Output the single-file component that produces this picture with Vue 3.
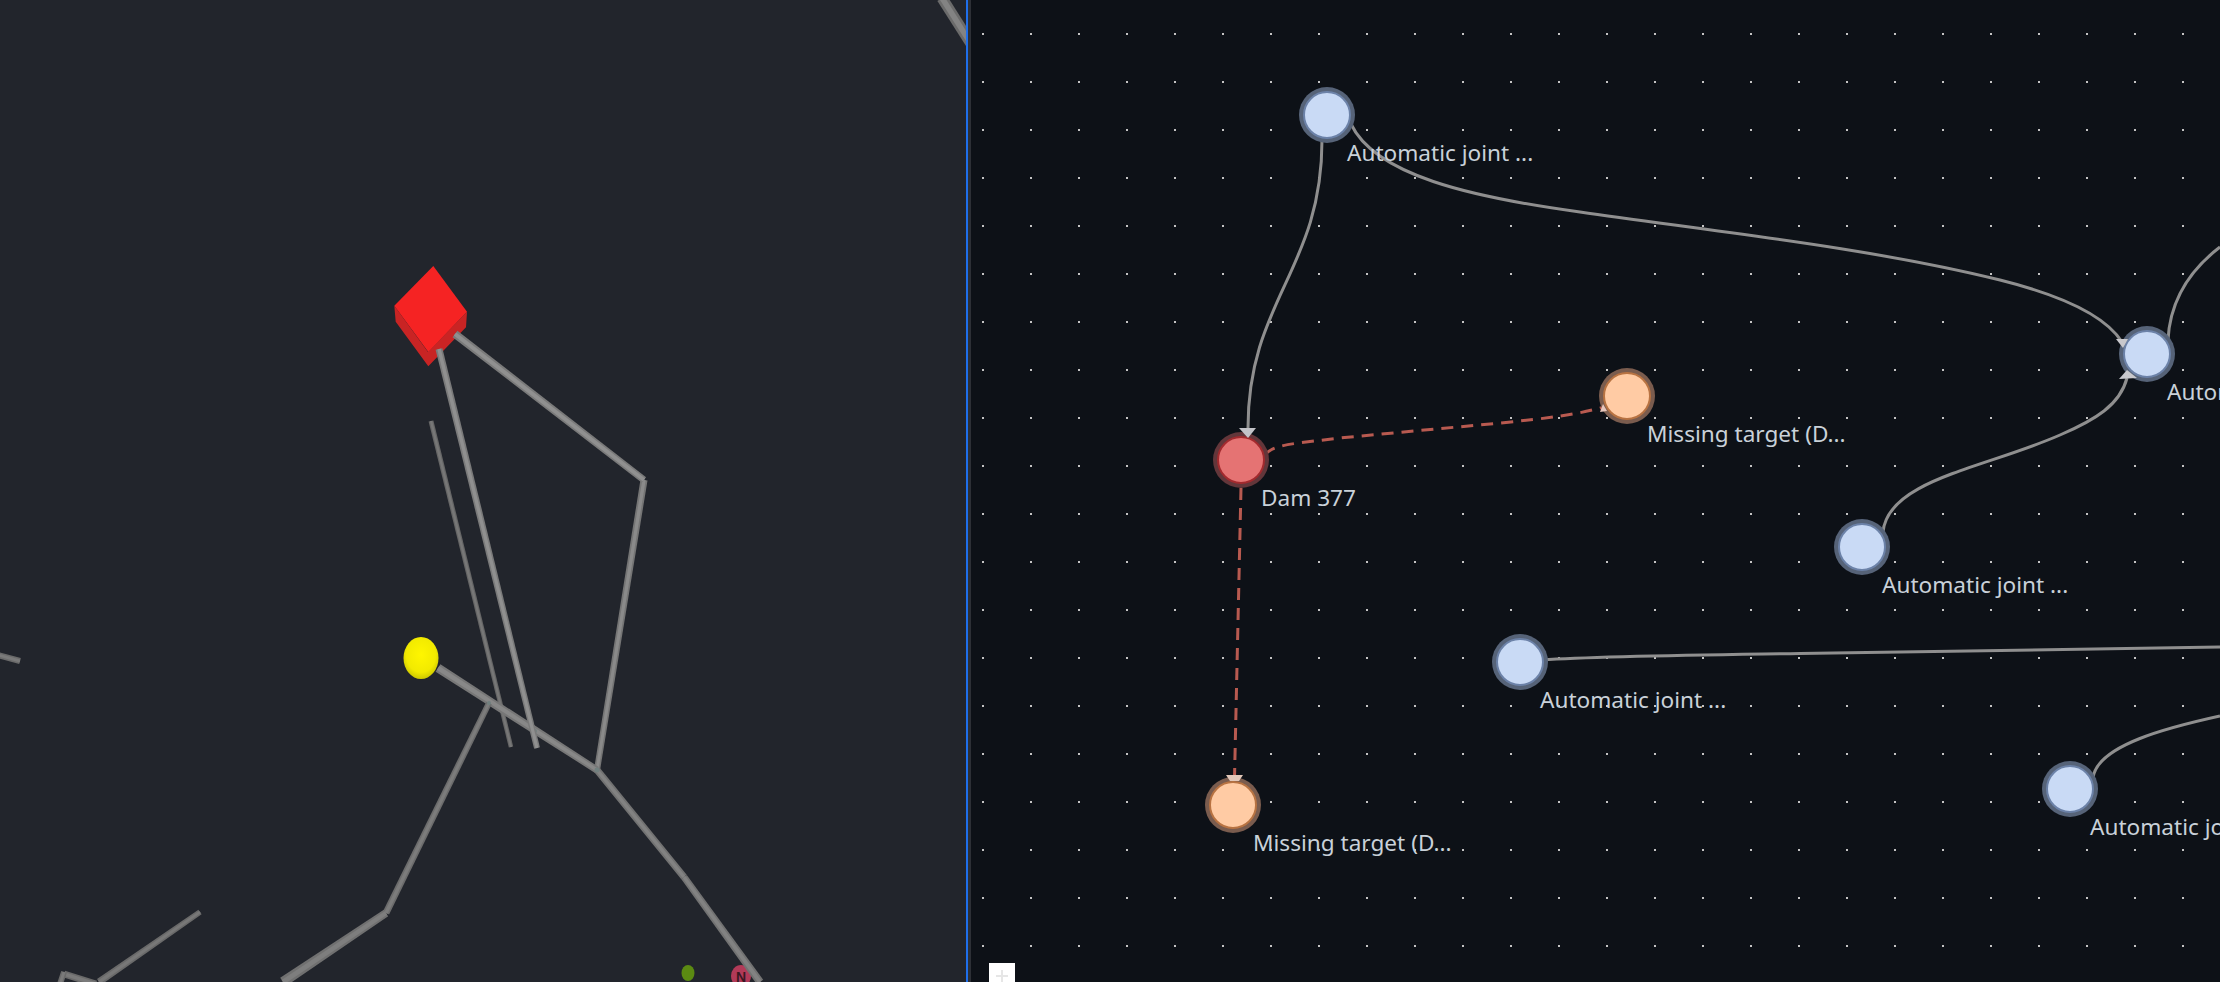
<template>
  <div class="workspace">
    <section class="viewer">
      <svg class="viewer-canvas" viewBox="0 0 966 982" width="966" height="982">
        <defs>
          <radialGradient id="ball" cx="50%" cy="42%" r="60%">
            <stop offset="0%" stop-color="#fff600" />
            <stop offset="70%" stop-color="#f2ea00" />
            <stop offset="100%" stop-color="#c9c400" />
          </radialGradient>
        </defs>

        <ellipse cx="688" cy="973" rx="6.5" ry="8" fill="#5b8a12" />
        <ellipse cx="741" cy="976" rx="10" ry="11" fill="#b23a58" />
        <text x="741" y="982" class="marker-letter" text-anchor="middle">N</text>

        <g v-for="(pipe, i) in pipeShapes" :key="i">
          <polygon :points="pipe.outer" :fill="pipe.edge" />
          <polygon :points="pipe.inner" :fill="pipe.core" />
        </g>

        <circle cx="489" cy="703" r="2" fill="#71807f" />
        <circle cx="535" cy="731" r="2" fill="#71807f" />
        <circle cx="597" cy="770" r="2.5" fill="#71807f" />

        <ellipse cx="421" cy="658" rx="17.5" ry="21" fill="url(#ball)" />

        <polygon points="394.3,305.7 395.7,321.7 428.3,366.3 466,327.3 467,311.7 428,352" fill="#c92424" />
        <polygon points="433.3,266 467,311.7 428.3,352 394.3,305.7" fill="#f52323" />
        <polygon :points="cubePipes[0].outer" :fill="cubePipes[0].edge" />
        <polygon :points="cubePipes[0].inner" :fill="cubePipes[0].core" />
        <polygon :points="cubePipes[1].outer" :fill="cubePipes[1].edge" />
        <polygon :points="cubePipes[1].inner" :fill="cubePipes[1].core" />
      </svg>
    </section>

    <div class="divider"></div>

    <section class="flow">
      <svg class="flow-edges" viewBox="971 0 1249 982" width="1249" height="982">
        <path v-for="(d, i) in solidEdges" :key="'s' + i" :d="d" class="edge" />
        <path v-for="(d, i) in dashedEdges" :key="'d' + i" :d="d" class="edge edge-missing" />
      </svg>

      <div
        v-for="node in nodes"
        :key="node.id"
        class="node"
        :class="node.kind"
        :style="{ left: node.x - 971 + 'px', top: node.y + 'px' }"
      >
        <span class="node-dot"></span>
        <span class="node-label">{{ node.label }}</span>
      </div>

      <svg class="flow-arrows" viewBox="971 0 1249 982" width="1249" height="982">
        <polygon points="1239,428 1256,428 1248,438" fill="#c3c3c8" />
        <polygon points="2116,339 2128,339 2123,348" fill="#c8c8cc" />
        <polygon points="2119,379 2127,370 2137,378" fill="#c8c8cc" />
        <polygon points="1600,412 1603,404 1607,411" fill="#e6c6bc" />
        <polygon points="1226,775 1243,775 1239,781 1230,781" fill="#e2c8ba" />
      </svg>

      <button type="button" class="zoom-btn" aria-label="zoom in">
        <svg viewBox="0 0 26 26" width="26" height="26">
          <path d="M13 7v13M7 13h12" stroke="#e6e6e6" stroke-width="2" fill="none" />
        </svg>
      </button>
    </section>
  </div>
</template>

<script setup>
// tapered tube drawn as a polygon, width goes from w1 to w2
const taper = (x1, y1, x2, y2, w1, w2) => {
  const len = Math.hypot(x2 - x1, y2 - y1)
  const nx = (y2 - y1) / len
  const ny = -(x2 - x1) / len
  return [
    [x1 + (nx * w1) / 2, y1 + (ny * w1) / 2],
    [x2 + (nx * w2) / 2, y2 + (ny * w2) / 2],
    [x2 - (nx * w2) / 2, y2 - (ny * w2) / 2],
    [x1 - (nx * w1) / 2, y1 - (ny * w1) / 2],
  ]
    .map((p) => p.map((v) => v.toFixed(1)).join(','))
    .join(' ')
}

const toShape = ([x1, y1, x2, y2, w1, w2, edge = '#757575', core = '#8a8a8a']) => ({
  outer: taper(x1, y1, x2, y2, w1, w2),
  inner: taper(x1, y1, x2, y2, w1 * 0.5, w2 * 0.5),
  edge,
  core,
})

const pipeShapes = [
  [644, 480, 597, 770, 7, 6],
  [431, 421, 511, 747, 5, 4.5, '#666', '#777'],
  [438, 668, 597, 770, 9, 7, '#777', '#888'],
  [597, 770, 684, 877, 7, 7, '#727272', '#828282'],
  [684, 877, 760, 982, 7, 8, '#727272', '#828282'],
  [489, 703, 386, 913, 6, 7, '#6c6c6c', '#7c7c7c'],
  [386, 913, 283, 982, 8, 10, '#707070', '#7e7e7e'],
  [200, 912, 99, 982, 5.5, 7, '#6a6a6a', '#787878'],
  [64, 974, 96, 984, 7, 7, '#6a6a6a', '#7a7a7a'],
  [64, 972, 60, 984, 6, 6, '#6a6a6a', '#7a7a7a'],
  [-2, 655, 20, 661, 6, 6, '#6a6a6a', '#7a7a7a'],
  [942, -2, 975, 50, 11, 11, '#6b6b6b', '#838383'],
].map(toShape)

const cubePipes = [
  [455, 334, 644, 480, 8, 7, '#7a7a7a', '#909090'],
  [439, 349, 537, 748, 7, 6, '#7a7a7a', '#909090'],
].map(toShape)

const solidEdges = [
  'M1322 140 C1322 270 1248 300 1248 428',
  'M1351 124 C1375 175 1470 197 1580 212 C1720 232 1870 248 2000 280 C2060 295 2105 315 2122 342',
  'M2168 340 C2170 300 2190 270 2220 247',
  'M1883 532 C1888 480 1985 468 2060 435 C2095 420 2120 405 2127 378',
  'M1542 660 C1600 656 1700 655 1800 653.5 L2220 647',
  'M2093 778 C2097 745 2170 727 2220 716',
]

const dashedEdges = [
  'M1265 455 C1272 444 1300 443 1340 438 L1500 423 C1550 418 1575 415 1604 407',
  'M1241 488 L1234.5 778',
]

const nodes = [
  { id: 'j1', kind: 'joint', x: 1327, y: 115, label: 'Automatic joint ...' },
  { id: 'j2', kind: 'joint', x: 2147, y: 354, label: 'Automatic joint ...' },
  { id: 'j3', kind: 'joint', x: 1862, y: 547, label: 'Automatic joint ...' },
  { id: 'j4', kind: 'joint', x: 1520, y: 662, label: 'Automatic joint ...' },
  { id: 'j5', kind: 'joint', x: 2070, y: 789, label: 'Automatic joint ...' },
  { id: 'd1', kind: 'dam', x: 1241, y: 460, label: 'Dam 377' },
  { id: 'm1', kind: 'missing', x: 1627, y: 396, label: 'Missing target (D...' },
  { id: 'm2', kind: 'missing', x: 1233, y: 805, label: 'Missing target (D...' },
]
</script>

<style>
html,
body {
  margin: 0;
  overflow: hidden;
  background: #0d1117;
}
</style>

<style scoped>
.workspace {
  display: flex;
  width: 100%;
  height: 100vh;
  overflow: hidden;
  font-family: 'Noto Sans', 'Open Sans', sans-serif;
}

.viewer {
  flex: 0 0 966px;
  background: #22252c;
  overflow: hidden;
}

.viewer-canvas {
  display: block;
}

.marker-letter {
  font-family: 'Liberation Sans', sans-serif;
  font-size: 14px;
  font-weight: 700;
  fill: #3a1722;
}

.divider {
  flex: 0 0 5px;
  box-sizing: border-box;
  border-left: 2px solid #1f6feb;
  background: #2d3036;
}

.flow {
  position: relative;
  flex: 1;
  overflow: hidden;
  background-color: #0d1117;
  background-image: radial-gradient(circle, #c4c4c4 1.1px, transparent 1.5px);
  background-size: 48px 48px;
  background-position: -12px 10px;
}

.flow-edges,
.flow-arrows {
  position: absolute;
  top: 0;
  left: 0;
  pointer-events: none;
}

.edge {
  fill: none;
  stroke: #8f8f8f;
  stroke-width: 3;
}

.edge-missing {
  stroke: #b85a50;
  stroke-width: 3;
  stroke-dasharray: 12 8;
}

.node {
  position: absolute;
  width: 0;
  height: 0;
}

.node-dot {
  position: absolute;
  left: -24px;
  top: -24px;
  width: 48px;
  height: 48px;
  box-sizing: border-box;
  border-radius: 50%;
  border: 2px solid;
}

.node-label {
  position: absolute;
  left: 20px;
  top: 22px;
  font-size: 22.6px;
  line-height: 32px;
  white-space: nowrap;
  color: #c9d1d9;
}

.joint .node-dot {
  background: #c9daf5;
  border-color: #6c82a8;
  box-shadow: 0 0 0 4px #566378;
}

.dam .node-dot {
  background: #e57373;
  border-color: #a32a2e;
  box-shadow: 0 0 0 4px #63363a;
}

.missing .node-dot {
  background: #ffcba4;
  border-color: #b87342;
  box-shadow: 0 0 0 4px #7a5c4e;
}

.zoom-btn {
  position: absolute;
  left: 18px;
  top: 963px;
  width: 26px;
  height: 26px;
  padding: 0;
  border: 0;
  background: #fff;
}

.zoom-btn svg {
  display: block;
}
</style>
